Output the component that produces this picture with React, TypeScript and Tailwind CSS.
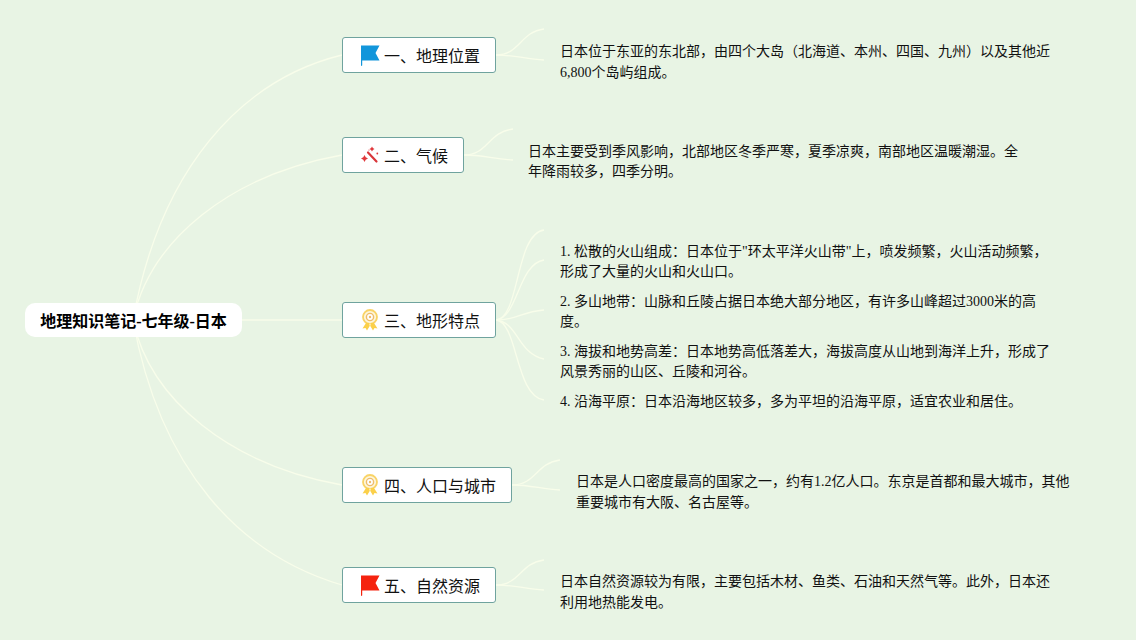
const font = { fontFamily: '"Liberation Serif", "Noto Sans CJK SC", serif' };

function FlagIcon({ color }: { color: string }) {
  return (
    <svg width="20" height="22" viewBox="0 0 20 22" className="shrink-0">
      <path d="M1 1.5H19.5L15.5 9L19.5 16.5H2.2V21.5L1 22Z" fill={color} />
    </svg>
  );
}

function WandIcon() {
  return (
    <svg width="20" height="20" viewBox="0 0 20 20" className="shrink-0">
      <path d="M8 7.5L16.5 16.5" stroke="#d9363a" strokeWidth="2.2" strokeLinecap="round" />
      <path d="M4.5 10l1.2 2.3 2.3 1.2-2.3 1.2-1.2 2.3-1.2-2.3L1 13.5l2.3-1.2z" fill="#e0383c" />
      <path d="M12 1.5l.9 1.6 1.6.9-1.6.9-.9 1.6-.9-1.6-1.6-.9 1.6-.9z" fill="#e0383c" />
      <circle cx="17.3" cy="8.5" r=".9" fill="#e0383c" />
      <circle cx="9" cy="5" r=".6" fill="#e0383c" />
    </svg>
  );
}

function MedalIcon() {
  return (
    <svg width="18" height="22" viewBox="0 0 18 22" fill="none" className="shrink-0">
      <circle cx="9" cy="8" r="7" stroke="#f9d366" strokeWidth="1.8" fill="#fdf6dc" />
      <circle cx="9" cy="8" r="3.6" stroke="#eebc6a" strokeWidth="1.4" fill="#fff" />
      <circle cx="9" cy="8" r="1.2" fill="#eebc6a" />
      <path d="M5 14L1.5 19.5L4.5 19L6 21.5L9 16.5L12 21.5L13.5 19L16.5 19.5L13 14Z" fill="#fbd04a" />
      <path d="M9 14.5V16.5" stroke="#fff" strokeWidth="1" />
    </svg>
  );
}

const branches = [
  { label: "一、地理位置", icon: <FlagIcon color="#1296db" />, x: 342, y: 37, w: 154 },
  { label: "二、气候", icon: <WandIcon />, x: 342, y: 137, w: 122 },
  { label: "三、地形特点", icon: <MedalIcon />, x: 342, y: 302, w: 154 },
  { label: "四、人口与城市", icon: <MedalIcon />, x: 342, y: 467, w: 170 },
  { label: "五、自然资源", icon: <FlagIcon color="#f5230f" />, x: 342, y: 567, w: 154 },
];

const notes = [
  { x: 560, y: 42, lh: 20.5, paras: [["日本位于东亚的东北部，由四个大岛（北海道、本州、四国、九州）以及其他近", "6,800个岛屿组成。"]] },
  { x: 528, y: 142, lh: 20, paras: [["日本主要受到季风影响，北部地区冬季严寒，夏季凉爽，南部地区温暖潮湿。全", "年降雨较多，四季分明。"]] },
  {
    x: 560,
    y: 242,
    lh: 20,
    paras: [
      ["1. 松散的火山组成：日本位于\"环太平洋火山带\"上，喷发频繁，火山活动频繁，", "形成了大量的火山和火山口。"],
      ["2. 多山地带：山脉和丘陵占据日本绝大部分地区，有许多山峰超过3000米的高", "度。"],
      ["3. 海拔和地势高差：日本地势高低落差大，海拔高度从山地到海洋上升，形成了", "风景秀丽的山区、丘陵和河谷。"],
      ["4. 沿海平原：日本沿海地区较多，多为平坦的沿海平原，适宜农业和居住。"],
    ],
  },
  { x: 576, y: 472, lh: 20.5, paras: [["日本是人口密度最高的国家之一，约有1.2亿人口。东京是首都和最大城市，其他", "重要城市有大阪、名古屋等。"]] },
  { x: 560, y: 572, lh: 20.5, paras: [["日本自然资源较为有限，主要包括木材、鱼类、石油和天然气等。此外，日本还", "利用地热能发电。"]] },
];

const links = [
  "M133 320C160 170 240 80 342 55",
  "M133 320C150 240 230 175 342 155",
  "M242 320H342",
  "M133 320C150 400 230 465 342 485",
  "M133 320C160 470 240 555 342 585",
  "M496 55C520 55 520 32 544 29",
  "M496 55C515 55 525 59 544 60",
  "M464 155C488 155 488 132 513 129",
  "M464 155C483 155 493 159 513 160",
  "M496 320C520 318 515 234 544 230",
  "M496 320C518 318 518 264 544 260",
  "M496 320C518 320 520 312 544 310",
  "M496 320C518 322 518 354 544 359",
  "M496 320C518 322 515 396 544 400",
  "M512 485C536 485 536 463 560 460",
  "M512 485C531 485 541 489 560 490",
  "M496 585C520 585 520 563 544 560",
  "M496 585C515 585 525 589 544 590",
];

export default function App() {
  return (
    <div className="relative w-[1136px] h-[640px] overflow-hidden bg-[#e8f4e4] text-[#111]" style={font}>
      <svg width="1136" height="640" className="absolute left-0 top-0" fill="none">
        {links.map((d) => (
          <path key={d} d={d} stroke="#f8fdea" strokeWidth="1.3" />
        ))}
      </svg>

      <div className="absolute left-[25px] top-[303px] w-[217px] h-[34px] pt-[3px] rounded-[10px] bg-white flex items-center justify-center text-[16px] font-bold text-black">
        地理知识笔记-七年级-日本
      </div>

      {branches.map((b) => (
        <div
          key={b.label}
          className="absolute h-[36px] rounded-[3px] bg-white border border-[#6fa39e] flex items-center pl-[16px] gap-[4px] text-[16px] whitespace-nowrap"
          style={{ left: b.x, top: b.y, width: b.w }}
        >
          <span className="w-[21px] flex justify-center">{b.icon}</span>
          <span className="pt-[3px]">{b.label}</span>
        </div>
      ))}

      {notes.map((n) => (
        <div
          key={n.paras[0][0]}
          className="absolute flex flex-col gap-[10px] text-[14px] whitespace-nowrap"
          style={{ left: n.x, top: n.y, lineHeight: `${n.lh}px` }}
        >
          {n.paras.map((p) => (
            <div key={p[0]}>
              {p.map((l) => (
                <div key={l}>{l}</div>
              ))}
            </div>
          ))}
        </div>
      ))}
    </div>
  );
}
